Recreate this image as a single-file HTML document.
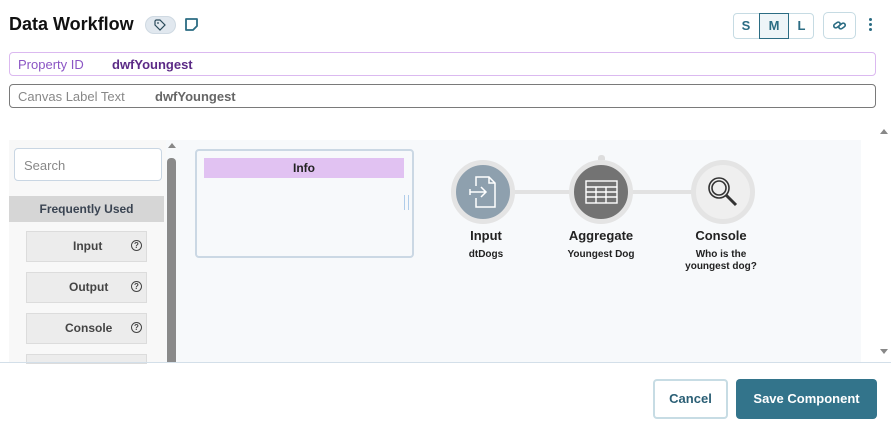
<!DOCTYPE html>
<html><head><style>
*{box-sizing:border-box;margin:0;padding:0}
body{width:891px;height:430px;background:#fff;font-family:"Liberation Sans",sans-serif;position:relative;overflow:hidden}
.a{position:absolute}
.item{position:absolute;left:26px;width:121px;height:31px;background:#ececec;border:1px solid #dcdcdc;font-size:12px;font-weight:bold;color:#444;line-height:29px;padding-left:46px}
.q{position:absolute;right:4px;top:8px;width:11px;height:11px;border:1.3px solid #444;border-radius:50%;font-size:8px;line-height:9px;text-align:center;font-weight:bold;padding:0}
.node{position:absolute;width:64px;height:64px;border-radius:50%;border:5px solid #e4e4e4}
.lbl{position:absolute;width:120px;text-align:center;font-size:13px;font-weight:bold;color:#222}
.sub{position:absolute;width:120px;text-align:center;font-size:10px;font-weight:bold;color:#222;line-height:12px}
</style></head><body>
<div class="a" style="left:9px;top:14px;font-size:18px;font-weight:bold;color:#111">Data Workflow</div>
<div class="a" style="left:145px;top:16px;width:31px;height:18px;border-radius:9px;background:#e1e8ef;border:1px solid #cfd9e2"></div>
<svg class="a" style="left:153px;top:18px" width="14" height="14" viewBox="0 0 14 14"><path d="M2 3v4l5 5 5-5-5-5H3z" fill="none" stroke="#2a4a5a" stroke-width="1.2"/><circle cx="5" cy="5" r="0.9" fill="#2a4a5a"/></svg>
<svg class="a" style="left:184px;top:17px" width="15" height="15" viewBox="0 0 15 15"><path d="M2 2h11v7l-4 4H2z" fill="none" stroke="#2b6c83" stroke-width="1.8" stroke-linejoin="round"/></svg>
<div class="a" style="left:733px;top:13px;width:81px;height:26px;border:1px solid #c6dbe3;border-radius:4px"></div>
<div class="a" style="left:759px;top:13px;width:30px;height:26px;border:1.5px solid #2b6c83;background:#eef5f8"></div>
<div class="a" style="left:733px;top:18px;width:26px;text-align:center;font-size:13px;font-weight:bold;color:#2b6c83">S</div>
<div class="a" style="left:759px;top:18px;width:30px;text-align:center;font-size:13px;font-weight:bold;color:#2b6c83">M</div>
<div class="a" style="left:789px;top:18px;width:25px;text-align:center;font-size:13px;font-weight:bold;color:#2b6c83">L</div>
<div class="a" style="left:823px;top:12px;width:33px;height:27px;border:1px solid #c6dbe3;border-radius:5px"></div>
<svg class="a" style="left:832px;top:18px" width="15" height="15" viewBox="0 0 15 15"><g fill="none" stroke="#2b6c83" stroke-width="1.6"><rect x="1.5" y="5" width="7" height="4" rx="2" transform="rotate(-35 5 7)"/><rect x="6.5" y="6" width="7" height="4" rx="2" transform="rotate(-35 10 8)"/></g></svg>
<div class="a" style="left:869px;top:18px;width:3px;height:3px;border-radius:50%;background:#2b6c83;box-shadow:0 5px 0 #2b6c83,0 10px 0 #2b6c83"></div>
<div class="a" style="left:9px;top:52px;width:867px;height:24px;border:1px solid #dbb9f0;border-radius:4px"></div>
<div class="a" style="left:18px;top:57px;font-size:13px;color:#8b55c4">Property ID</div>
<div class="a" style="left:112px;top:57px;font-size:13px;font-weight:bold;color:#5b2a86">dwfYoungest</div>
<div class="a" style="left:9px;top:84px;width:867px;height:24px;border:1px solid #7a7a7a;border-radius:4px"></div>
<div class="a" style="left:18px;top:89px;font-size:13px;color:#888">Canvas Label Text</div>
<div class="a" style="left:155px;top:89px;font-size:13px;font-weight:bold;color:#666">dwfYoungest</div>
<div class="a" style="left:9px;top:140px;width:852px;height:222px;background:#f7f9fb"></div>
<div class="a" style="left:9px;top:140px;width:157px;height:222px;background:#f8f8f8"></div>
<div class="a" style="left:14px;top:148px;width:148px;height:33px;border:1px solid #c9d6e3;border-radius:4px;background:#fff;font-size:13px;color:#888;padding:9px 0 0 9px">Search</div>
<div class="a" style="left:9px;top:196px;width:155px;height:26px;background:#d6d6d6;font-size:12px;font-weight:bold;color:#3a4452;text-align:center;line-height:26px">Frequently Used</div>
<div class="item" style="top:231px">Input<span class="q">?</span></div>
<div class="item" style="top:272px;padding-left:42px">Output<span class="q">?</span></div>
<div class="item" style="top:313px;padding-left:38px">Console<span class="q">?</span></div>
<div class="item" style="top:354px;height:10px"></div>
<div class="a" style="left:167px;top:158px;width:9px;height:204px;background:#8a8a8a;border-radius:4px 4px 0 0"></div>
<div class="a" style="left:168px;top:143px;width:0;height:0;border-left:4px solid transparent;border-right:4px solid transparent;border-bottom:5px solid #888"></div>
<div class="a" style="left:195px;top:149px;width:219px;height:109px;border:2px solid #cbd8e4;border-radius:4px;background:#f7f9fb"></div>
<div class="a" style="left:204px;top:158px;width:200px;height:20px;background:#e1c2f2;font-size:12px;font-weight:bold;color:#222;text-align:center;line-height:20px">Info</div>
<div class="a" style="left:404px;top:195px;width:5px;height:15px;border-left:1.5px solid #b0cdea;border-right:1.5px solid #b0cdea"></div>
<div class="a" style="left:514px;top:190px;width:58px;height:4px;background:#e2e2e2"></div>
<div class="a" style="left:632px;top:190px;width:60px;height:4px;background:#e2e2e2"></div>
<div class="node" style="left:451px;top:160px;background:#8ea0ae"></div>
<svg class="a" style="left:467px;top:174px" width="34" height="36" viewBox="0 0 34 36"><g fill="none" stroke="#fff" stroke-width="1.5"><path d="M9 12V3h13l6 6v24H9v-9"/><path d="M22 3v6h6"/><path d="M3 18h16M14 13l5 5-5 5"/><path d="M3 15v6"/></g></svg>
<div class="node" style="left:569px;top:160px;background:#737373"></div>
<div class="a" style="left:598px;top:155px;width:7px;height:5px;background:#ddd;border-radius:3px 3px 0 0"></div>
<svg class="a" style="left:585px;top:180px" width="33" height="25" viewBox="0 0 33 25"><g fill="none" stroke="#fff" stroke-width="1.4"><rect x="1" y="1" width="31" height="22"/><path d="M1 7h31M1 12h31M1 17h31M11 7v16M21 7v16"/></g></svg>
<div class="node" style="left:691px;top:160px;background:#efefef"></div>
<svg class="a" style="left:705px;top:175px" width="36" height="36" viewBox="0 0 36 36"><g fill="none" stroke="#333" stroke-width="1.6"><circle cx="14" cy="13" r="10"/><circle cx="14" cy="13" r="7"/><path d="M21 20l10 10" stroke-width="3"/></g></svg>
<div class="lbl" style="left:426px;top:228px">Input</div>
<div class="sub" style="left:426px;top:249px">dtDogs</div>
<div class="lbl" style="left:541px;top:228px">Aggregate</div>
<div class="sub" style="left:541px;top:249px">Youngest Dog</div>
<div class="lbl" style="left:661px;top:228px">Console</div>
<div class="sub" style="left:661px;top:249px">Who is the<br>youngest dog?</div>
<div class="a" style="left:880px;top:129px;width:0;height:0;border-left:4px solid transparent;border-right:4px solid transparent;border-bottom:5px solid #888"></div>
<div class="a" style="left:880px;top:349px;width:0;height:0;border-left:4px solid transparent;border-right:4px solid transparent;border-top:5px solid #888"></div>
<div class="a" style="left:0;top:362px;width:891px;height:1px;background:#d3dfe9"></div>
<div class="a" style="left:653px;top:379px;width:75px;height:40px;border:2px solid #c7dce4;border-radius:4px;font-size:13px;font-weight:bold;color:#2b5f75;text-align:center;line-height:36px">Cancel</div>
<div class="a" style="left:736px;top:379px;width:141px;height:40px;background:#33748b;border-radius:4px;font-size:13px;font-weight:bold;color:#fff;text-align:center;line-height:40px">Save Component</div>
</body></html>
